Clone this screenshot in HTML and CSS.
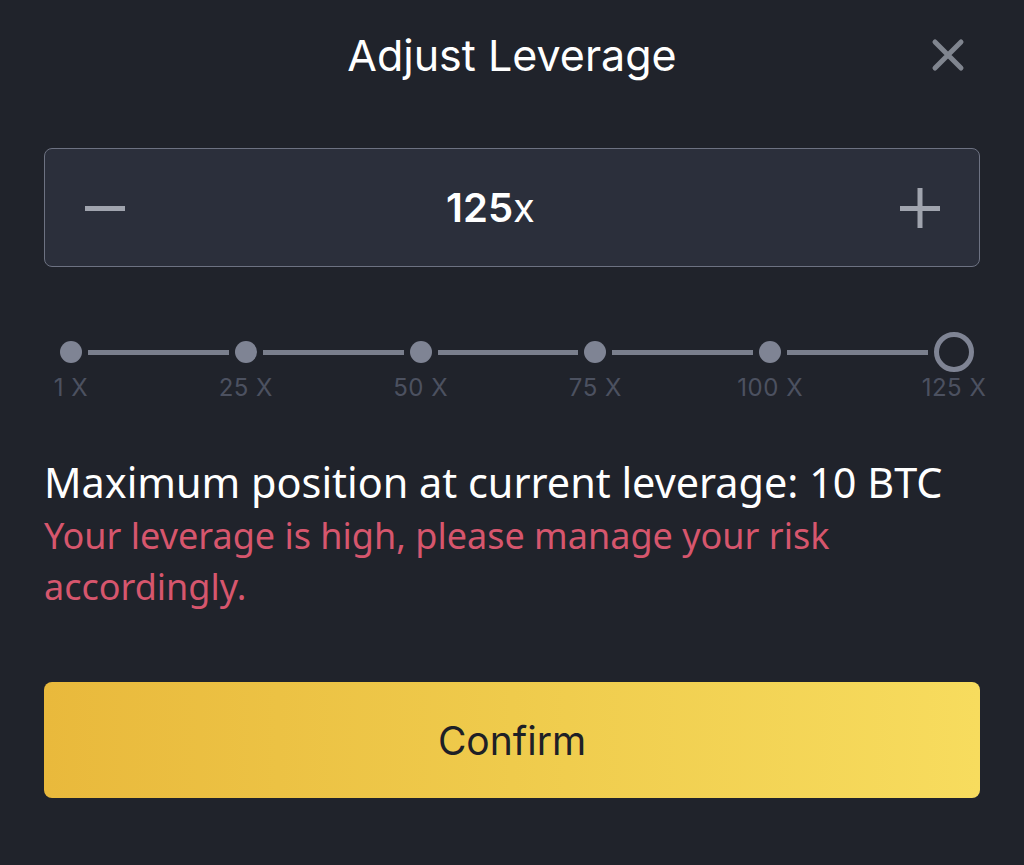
FILE: index.html
```html
<!DOCTYPE html>
<html lang="en">
<head>
    <meta charset="UTF-8">
    <meta name="viewport" content="width=device-width, initial-scale=1.0">
    <title>Adjust Leverage</title>
    <link rel="stylesheet" href="styles.css">
</head>
<body>
    <div class="sheet">
        <div class="sheet-header">
            <h2>Adjust Leverage</h2>
            <button class="close" aria-label="Close">
                <svg width="34" height="34" viewBox="0 0 34 34">
                    <path d="M4 4 L30 30 M30 4 L4 30" stroke="#80858f" stroke-width="5" stroke-linecap="round"/>
                </svg>
            </button>
        </div>

        <div class="stepper">
            <button class="step" aria-label="Decrease">
                <svg width="40" height="40" viewBox="0 0 40 40">
                    <rect x="0" y="18" width="40" height="5" fill="#a0a4ae"/>
                </svg>
            </button>
            <div class="value"><b>125</b>x</div>
            <button class="step" aria-label="Increase">
                <svg width="40" height="40" viewBox="0 0 40 40">
                    <rect x="0" y="18" width="40" height="5" fill="#a0a4ae"/>
                    <rect x="17.5" y="0" width="5" height="40" fill="#a0a4ae"/>
                </svg>
            </button>
        </div>

        <div class="slider">
            <div class="stop"><i></i><span>1 X</span></div>
            <div class="track"></div>
            <div class="stop"><i></i><span>25 X</span></div>
            <div class="track"></div>
            <div class="stop"><i></i><span>50 X</span></div>
            <div class="track"></div>
            <div class="stop"><i></i><span>75 X</span></div>
            <div class="track"></div>
            <div class="stop"><i></i><span>100 X</span></div>
            <div class="track"></div>
            <div class="stop active"><i></i><span>125 X</span></div>
        </div>

        <div class="info">
            <p class="max">Maximum position at current leverage: 10 BTC</p>
            <p class="warn">Your leverage is high, please manage your risk accordingly.</p>
        </div>

        <button class="confirm">Confirm</button>
    </div>
</body>
</html>
```

FILE: styles.css
```css
body {
    margin: 0;
    background-color: #20232b;
    font-family: Inter, "Noto Sans", sans-serif;
    color: #fff;
}
button {
    background: none;
    border: none;
    padding: 0;
    cursor: pointer;
    font-family: inherit;
}
.sheet {
    padding: 0 44px;
}
.sheet-header {
    position: relative;
    height: 110px;
    display: flex;
    align-items: center;
    justify-content: center;
}
.sheet-header h2 {
    margin: 0;
    font-size: 43px;
    font-weight: 400;
}
.close {
    position: absolute;
    right: 15px;
    top: 38px;
    display: flex;
}
.stepper {
    margin-top: 38px;
    height: 117px;
    display: flex;
    align-items: center;
    justify-content: space-between;
    padding: 0 39px 0 40px;
    background: #2b2f3b;
    border: 1.5px solid #6d7282;
    border-radius: 8px;
}
.step {
    display: flex;
}
.value {
    font-size: 40px;
    color: #fff;
    margin-left: -44px;
}
.value b {
    font-weight: 600;
}
.slider {
    margin-top: 74px;
    height: 100px;
    display: flex;
    align-items: flex-start;
    padding: 0 6px 0 16px;
}
.stop {
    display: flex;
    flex-direction: column;
    align-items: center;
    width: 22px;
    flex: none;
}
.stop i {
    display: block;
    width: 22px;
    height: 22px;
    border-radius: 50%;
    background: #7f8494;
}
.stop span {
    margin-top: 10px;
    white-space: nowrap;
    font-size: 24px;
    color: #4c5160;
    letter-spacing: 0.5px;
}
.stop.active {
    width: 40px;
    margin-top: -9px;
}
.stop.active i {
    width: 30px;
    height: 30px;
    background: transparent;
    border: 5px solid #7f8494;
}
.stop.active span {
    margin-top: 1px;
}
.track {
    flex: 1;
    height: 5px;
    margin: 9px 6px 0;
    background: #7a7f8d;
}
.info {
    margin-top: 13px;
    font-family: "Noto Sans", sans-serif;
}
.info p {
    margin: 0;
}
.max {
    font-size: 41.4px;
    line-height: 56px;
}
.warn {
    font-size: 36px;
    line-height: 51px;
    color: #d6566d;
}
.confirm {
    display: block;
    width: 100%;
    margin-top: 70px;
    height: 116px;
    border-radius: 8px;
    background: linear-gradient(90deg, #e9b93c, #efcb4c 50%, #f7dc5e);
    color: #1e2026;
    font-size: 39px;
}
```
